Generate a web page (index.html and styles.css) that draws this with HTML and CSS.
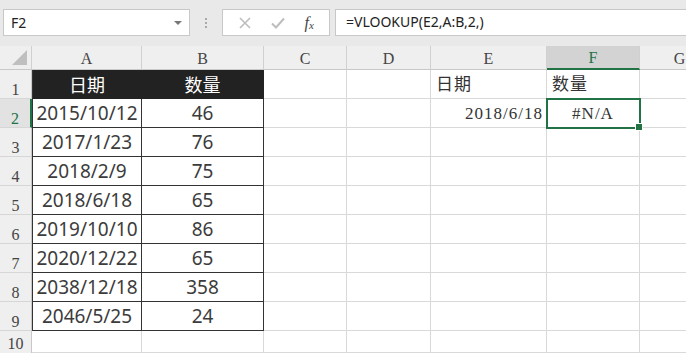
FILE: index.html
```html
<!DOCTYPE html>
<html lang="zh-CN">
<head>
    <meta charset="UTF-8">
    <title>VLOOKUP</title>
    <link rel="stylesheet" href="styles.css">
</head>
<body>
    <div class="toolbar">
        <div class="name-box">
            <span>F2</span>
            <span class="dropdown"></span>
        </div>
        <div class="grip">
            <span></span><span></span><span></span>
        </div>
        <div class="fx-buttons">
            <svg class="icon" width="14" height="14" viewBox="0 0 14 14">
                <path d="M2 2 L12 12 M12 2 L2 12" stroke="#bdbdbd" stroke-width="1.6" fill="none"/>
            </svg>
            <svg class="icon" width="16" height="14" viewBox="0 0 16 14">
                <path d="M2 7.5 L6 11.5 L14 2.5" stroke="#bdbdbd" stroke-width="2" fill="none"/>
            </svg>
            <span class="fx">f<sub>x</sub></span>
        </div>
        <div class="formula">=VLOOKUP(E2,A:B,2,)</div>
    </div>

    <div class="sheet">
        <div class="corner"><span class="tri"></span></div>
        <div class="col-head">A</div>
        <div class="col-head">B</div>
        <div class="col-head">C</div>
        <div class="col-head">D</div>
        <div class="col-head">E</div>
        <div class="col-head active">F</div>
        <div class="col-head">G</div>

        <div class="row-head">1</div>
        <div class="cell th first">日期</div>
        <div class="cell th">数量</div>
        <div class="cell"></div>
        <div class="cell"></div>
        <div class="cell song left">日期</div>
        <div class="cell song left">数量</div>
        <div class="cell"></div>

        <div class="row-head active">2</div>
        <div class="cell tb first">2015/10/12</div>
        <div class="cell tb">46</div>
        <div class="cell"></div>
        <div class="cell"></div>
        <div class="cell song right">2018/6/18</div>
        <div class="cell song selected">#N/A</div>
        <div class="cell"></div>

        <div class="row-head">3</div>
        <div class="cell tb first">2017/1/23</div>
        <div class="cell tb">76</div>
        <div class="cell"></div><div class="cell"></div><div class="cell"></div><div class="cell"></div><div class="cell"></div>

        <div class="row-head">4</div>
        <div class="cell tb first">2018/2/9</div>
        <div class="cell tb">75</div>
        <div class="cell"></div><div class="cell"></div><div class="cell"></div><div class="cell"></div><div class="cell"></div>

        <div class="row-head">5</div>
        <div class="cell tb first">2018/6/18</div>
        <div class="cell tb">65</div>
        <div class="cell"></div><div class="cell"></div><div class="cell"></div><div class="cell"></div><div class="cell"></div>

        <div class="row-head">6</div>
        <div class="cell tb first">2019/10/10</div>
        <div class="cell tb">86</div>
        <div class="cell"></div><div class="cell"></div><div class="cell"></div><div class="cell"></div><div class="cell"></div>

        <div class="row-head">7</div>
        <div class="cell tb first">2020/12/22</div>
        <div class="cell tb">65</div>
        <div class="cell"></div><div class="cell"></div><div class="cell"></div><div class="cell"></div><div class="cell"></div>

        <div class="row-head">8</div>
        <div class="cell tb first">2038/12/18</div>
        <div class="cell tb">358</div>
        <div class="cell"></div><div class="cell"></div><div class="cell"></div><div class="cell"></div><div class="cell"></div>

        <div class="row-head">9</div>
        <div class="cell tb first">2046/5/25</div>
        <div class="cell tb">24</div>
        <div class="cell"></div><div class="cell"></div><div class="cell"></div><div class="cell"></div><div class="cell"></div>

        <div class="row-head last">10</div>
        <div class="cell"></div><div class="cell"></div><div class="cell"></div><div class="cell"></div><div class="cell"></div><div class="cell"></div><div class="cell"></div>
    </div>
</body>
</html>
```

FILE: styles.css
```css
* {
    margin: 0;
    padding: 0;
    box-sizing: border-box;
}

body {
    width: 686px;
    height: 353px;
    overflow: hidden;
    background: #ffffff;
    font-family: "Noto Sans", "Noto Sans CJK SC", sans-serif;
    color: #333;
}

/* Formula bar */
.toolbar {
    height: 46px;
    background: #e9e9e9;
    display: flex;
    align-items: flex-start;
    padding: 9px 0 0 3px;
}

.name-box {
    width: 187px;
    height: 27px;
    background: #fff;
    border: 1px solid #c8c8c8;
    display: flex;
    align-items: center;
    justify-content: space-between;
    padding: 0 7px 0 7px;
    font-size: 14px;
    color: #222;
}

.dropdown {
    width: 0;
    height: 0;
    border-left: 4px solid transparent;
    border-right: 4px solid transparent;
    border-top: 4px solid #777;
}

.grip {
    width: 32px;
    height: 27px;
    display: flex;
    flex-direction: column;
    align-items: center;
    justify-content: center;
    gap: 2px;
}

.grip span {
    width: 2px;
    height: 2px;
    background: #a9a9a9;
}

.fx-buttons {
    width: 108px;
    height: 27px;
    background: #fff;
    border: 1px solid #c8c8c8;
    display: flex;
    align-items: center;
    justify-content: space-around;
    padding: 0 6px;
}

.fx {
    font-family: "Liberation Serif", serif;
    font-style: italic;
    font-size: 16px;
    color: #444;
}

.fx sub {
    font-size: 11px;
    vertical-align: -1px;
}

.formula {
    flex: 1;
    height: 27px;
    margin-left: 5px;
    margin-right: -4px;
    background: #fff;
    border: 1px solid #c8c8c8;
    padding-left: 10px;
    font-size: 14px;
    line-height: 24px;
    color: #222;
}

/* Sheet grid */
.sheet {
    display: grid;
    grid-template-columns: 32px 110px 122px 83px 84px 116px 93px 80px;
    grid-template-rows: 24px repeat(9, 29px) 22px;
    background: #fff;
}

.corner {
    background: #efefef;
    border-right: 1px solid #d0d0d0;
    border-bottom: 1px solid #c8c8c8;
    position: relative;
}

.tri {
    position: absolute;
    right: 4px;
    bottom: 4px;
    width: 0;
    height: 0;
    border-left: 15px solid transparent;
    border-bottom: 15px solid #bfbfbf;
}

.col-head {
    background: #efefef;
    border-right: 1px solid #d0d0d0;
    border-bottom: 1px solid #c8c8c8;
    font-family: "Liberation Serif", "Noto Sans CJK SC", serif;
    font-size: 16px;
    color: #444;
    display: flex;
    align-items: flex-end;
    justify-content: center;
    padding-bottom: 1px;
}

.col-head.active {
    background: #d3d3d3;
    color: #217346;
    border-bottom: 2px solid #217346;
}

.row-head {
    background: #efefef;
    border-right: 1px solid #c8c8c8;
    border-bottom: 1px solid #d6d6d6;
    font-family: "Liberation Serif", serif;
    font-size: 16px;
    line-height: 1;
    color: #444;
    display: flex;
    align-items: flex-end;
    justify-content: center;
}

.row-head.last {
    border-bottom: none;
    padding-bottom: 1px;
}

.row-head.active {
    background: #e2e2e2;
    color: #217346;
    border-right: 2px solid #217346;
}

.cell {
    border-right: 1px solid #d9d9d9;
    border-bottom: 1px solid #d9d9d9;
    display: flex;
    align-items: center;
    justify-content: center;
    white-space: nowrap;
}

.cell.th {
    background: #222;
    color: #fff;
    font-family: "Noto Sans CJK SC", sans-serif;
    font-size: 18px;
    border-color: #222;
}

.cell.tb {
    font-size: 19px;
    color: #3c3c3c;
    border-right-color: #333;
    border-bottom-color: #333;
}

.cell.first {
    border-left: 1px solid #333;
}

.cell.song {
    font-family: "Liberation Serif", "Noto Sans CJK SC", serif;
    font-size: 17px;
    letter-spacing: 1px;
    color: #333;
    align-items: flex-end;
    padding-bottom: 3px;
}

.cell.left {
    justify-content: flex-start;
    padding-left: 5px;
}

.cell.right {
    justify-content: flex-end;
    padding-right: 3px;
}

.cell.selected {
    position: relative;
    outline: 2px solid #217346;
    outline-offset: -1px;
    z-index: 1;
}

.cell.selected::after {
    content: "";
    position: absolute;
    right: -4px;
    bottom: -4px;
    width: 6px;
    height: 6px;
    background: #217346;
    border: 1px solid #fff;
}
```
